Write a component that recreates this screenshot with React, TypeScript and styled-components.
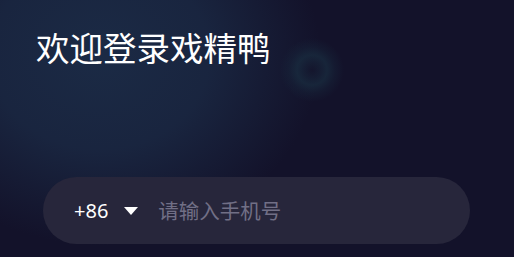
import React from "react";
import styled, { createGlobalStyle } from "styled-components";

const Global = createGlobalStyle`
  html, body { margin: 0; padding: 0; background: #13122a; }
  body { font-family: "Noto Sans CJK SC", "Noto Sans", sans-serif; }
`;

const Page = styled.div`
  width: 514px;
  height: 257px;
  box-sizing: border-box;
  overflow: hidden;
  background:
    radial-gradient(circle at 312px 70px, rgba(20,22,45,0.8) 0px, rgba(24,42,62,0.45) 8px, rgba(26,50,68,0.6) 15px, rgba(24,44,64,0.3) 23px, rgba(20,30,50,0) 32px),
    radial-gradient(ellipse 220px 190px at 100px 55px, rgba(28,45,72,0.9) 0%, rgba(27,43,70,0.75) 50%, rgba(19,18,42,0) 100%),
    #13122a;
  display: flex;
  flex-direction: column;
  padding: 23px 44px 0 36px;
`;

const Title = styled.h1`
  margin: 0;
  font-size: 33.5px;
  font-weight: 400;
  line-height: 48px;
  color: #ffffff;
`;

const Field = styled.div`
  margin-top: 106px;
  margin-left: 7px;
  height: 67px;
  border-radius: 34px;
  background: #27263b;
  display: flex;
  align-items: center;
  padding-left: 31px;
`;

const Code = styled.span`
  font-family: "Noto Sans", sans-serif;
  font-size: 20px;
  color: #ffffff;
  line-height: 1;
`;

const Caret = styled.span`
  margin-left: 16px;
  width: 0;
  height: 0;
  border-left: 7px solid transparent;
  border-right: 7px solid transparent;
  border-top: 8px solid #ffffff;
`;

const Placeholder = styled.span`
  margin-left: 20px;
  font-size: 20.5px;
  color: #716f86;
  line-height: 1;
`;

export default function App() {
  return (
    <>
      <Global />
      <Page>
        <Title>欢迎登录戏精鸭</Title>
        <Field>
          <Code>+86</Code>
          <Caret />
          <Placeholder>请输入手机号</Placeholder>
        </Field>
      </Page>
    </>
  );
}
